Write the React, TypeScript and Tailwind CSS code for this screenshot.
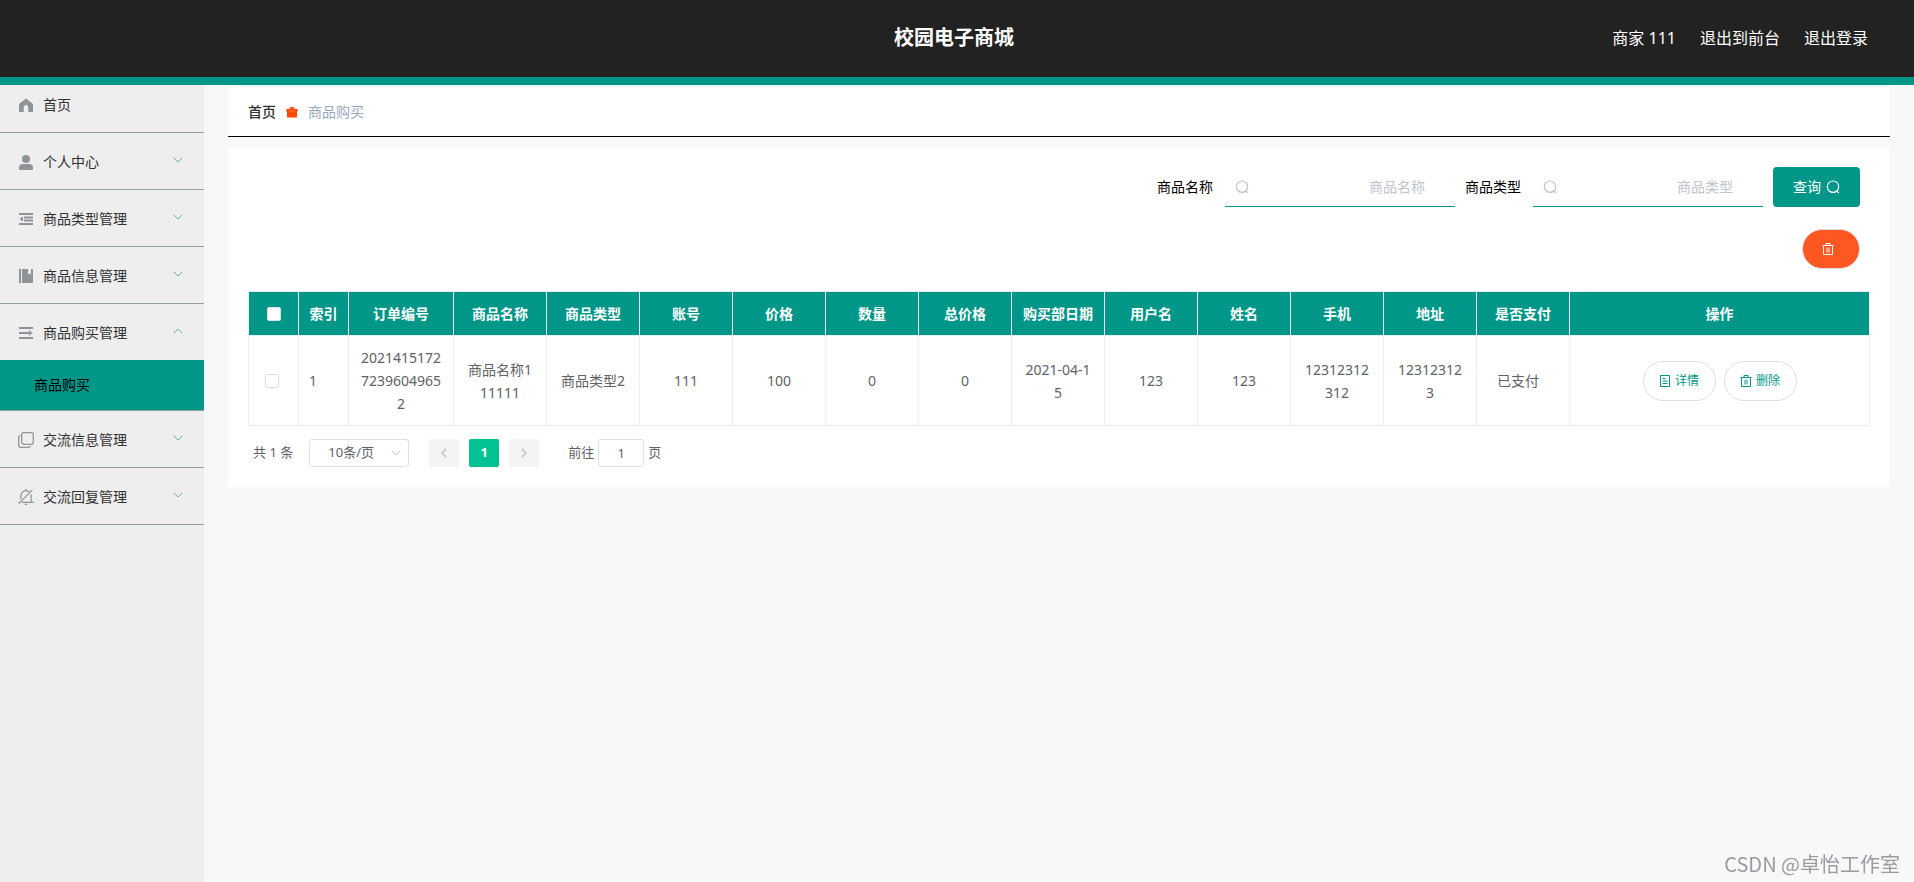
import { useState } from "react";
import type { ReactNode } from "react";

/* ------------------- ICONS ------------------- */
const HomeIcon = () => (
  <svg viewBox="0 0 14 14" className="size-[14px] fill-[#909399]">
    <path d="M7 0.4 14 6v8H9.3V9.2a2.3 2.3 0 0 0-4.6 0V14H0V6z" />
  </svg>
);

const UserIcon = () => (
  <svg viewBox="0 0 14 15" className="h-[15px] w-[14px] fill-[#909399]">
    <circle cx="7" cy="4" r="4" />
    <path d="M4 9h6a4 4 0 0 1 4 4v1a1 1 0 0 1-1 1H1a1 1 0 0 1-1-1v-1a4 4 0 0 1 4-4z" />
  </svg>
);

const FoldIcon = () => (
  <svg viewBox="0 0 14 12" className="h-3 w-[14px] fill-[#909399]">
    <path d="M0 0h14v2H0zM5 3.4h9v2H5zM5 6.6h9v2H5zM0 10h14v2H0zM4 3.6v4.8L.6 6z" />
  </svg>
);

const ExpandIcon = () => (
  <svg viewBox="0 0 14 12" className="h-3 w-[14px] fill-[#909399]">
    <path d="M0 0h14v2H0zM0 5h10v2H0zM0 10h14v2H0zM9.8 3.2v5.6L13.6 6z" />
  </svg>
);

const BookIcon = () => (
  <svg viewBox="0 0 14 14" className="size-[14px] fill-[#909399]">
    <path d="M0 0h2v14H0zM3 0h6v5.4l1.5-1.2L12 5.4V0h2v14H3z" />
  </svg>
);

const CopyIcon = () => (
  <svg viewBox="0 0 16 16" className="size-4 fill-none stroke-[#909399] stroke-[1.3]">
    <rect x="3.7" y="0.7" width="11.6" height="11.6" rx="2" />
    <path d="M2.3 3.7A2 2 0 0 0 .7 5.6v7.7a2 2 0 0 0 2 2h7.7a2 2 0 0 0 2-1.2" />
  </svg>
);

const BellOffIcon = () => (
  <svg viewBox="0 0 16 16" className="size-4 fill-none stroke-[#909399] stroke-[1.2]">
    <path d="M.8 14.6 14.4.8M2.8 10.4V6.8a5.2 5.2 0 0 1 8.4-4M13.2 5.2v8.2M4 13.4h11.8M.4 13.4h1M6.8 15.4h2.4M8 0v1.6" />
  </svg>
);

const GiftIcon = () => (
  <svg viewBox="0 0 12 12" className="size-3 fill-[#ff4500]">
    <path d="M1 5.8h10v5.7H1zM.4 3h3.8L3.2 1.8l.9-.8 1.2 1.3V.4h1.4v1.9L7.9 1l.9.8-1 1.2h3.8v2.8H.4z" />
    <path d="M4 4.2v2M6 4.2v2.4M8 4.2v2" className="stroke-[#ffb39b] stroke-[0.6]" />
  </svg>
);

const SearchIcon = ({ className }: { className: string }) => (
  <svg viewBox="0 0 14 14" className={`size-[14px] fill-none stroke-[1.2] ${className}`}>
    <circle cx="7" cy="6.7" r="5.7" />
    <path d="m10.4 10.3 2.5 2.9" />
  </svg>
);

const TrashIcon = () => (
  <svg viewBox="0 0 12 12" className="size-3 fill-none stroke-current">
    <path d="M.5 2.5h11M4 2.5v-2h4v2M1.5 2.5v9h9v-9M5 4.5v5M7 4.5v5" />
  </svg>
);

const DocIcon = () => (
  <svg viewBox="0 0 12 12" className="size-3 fill-none stroke-current">
    <path d="M1.5.5h9v11h-9zM3.5 3.5h3M3.5 6h5M3.5 8.500h5" />
  </svg>
);

const Chevron = ({ className }: { className: string }) => (
  <svg viewBox="0 0 10 6" className={`h-[6px] w-[10px] fill-none ${className}`}>
    <path d="M.7.8 5 5 9.3.8" />
  </svg>
);

/* ------------------- DATA ------------------- */
type MenuItem = { label: string; icon: ReactNode; children?: string[] };

const menu: MenuItem[] = [
  { label: "首页", icon: <HomeIcon /> },
  { label: "个人中心", icon: <UserIcon />, children: [] },
  { label: "商品类型管理", icon: <FoldIcon />, children: [] },
  { label: "商品信息管理", icon: <BookIcon />, children: [] },
  { label: "商品购买管理", icon: <ExpandIcon />, children: ["商品购买"] },
  { label: "交流信息管理", icon: <CopyIcon />, children: [] },
  { label: "交流回复管理", icon: <BellOffIcon />, children: [] },
];

const columns = [
  { title: "订单编号", value: "202141517272396049652", width: "w-[105px]" },
  { title: "商品名称", value: "商品名称111111", width: "w-[93px]" },
  { title: "商品类型", value: "商品类型2", width: "w-[93px]" },
  { title: "账号", value: "111", width: "w-[93px]" },
  { title: "价格", value: "100", width: "w-[93px]" },
  { title: "数量", value: "0", width: "w-[93px]" },
  { title: "总价格", value: "0", width: "w-[93px]" },
  { title: "购买部日期", value: "2021-04-15", width: "w-[93px]" },
  { title: "用户名", value: "123", width: "w-[93px]" },
  { title: "姓名", value: "123", width: "w-[93px]" },
  { title: "手机", value: "12312312312", width: "w-[93px]" },
  { title: "地址", value: "123123123", width: "w-[93px]" },
];

/* ------------------- COMPONENTS ------------------- */
const Sidebar = () => {
  const [open, setOpen] = useState("商品购买管理");

  return (
    <nav className="-mt-[9px] w-[204px] shrink-0 bg-[#eee] text-sm text-[#303133]">
      <ul>
        {menu.map(({ label, icon, children }) => (
          <li key={label} className="border-b border-[#8fa39d]">
            <button
              type="button"
              onClick={() => setOpen(open === label ? "" : label)}
              className="flex h-14 w-full items-center pt-[2px] pr-[21px] pl-[18px] text-left"
            >
              <span className="mr-[9px] flex w-4 justify-center">{icon}</span>
              <span className="flex-1">{label}</span>
              {children && (
                <span className="mb-1">
                  <Chevron className={open === label ? "rotate-180 stroke-[#5fb3a8]" : "stroke-[#5fb3a8]"} />
                </span>
              )}
            </button>
            {open === label &&
              children?.map((child) => (
                <a key={child} href="#" className="flex h-[50px] items-center bg-[#009688] pl-[34px] text-black">
                  {child}
                </a>
              ))}
          </li>
        ))}
      </ul>
    </nav>
  );
};

const SearchField = ({ id, label }: { id: string; label: string }) => (
  <div className="flex items-center">
    <label htmlFor={id} className="mr-3 text-sm text-black">
      {label}
    </label>
    <div className="flex h-10 w-[230px] items-center border-b border-[#009688] px-[10px]">
      <SearchIcon className="stroke-[#c0c4cc]" />
      <input
        id={id}
        placeholder={label}
        className="min-w-0 flex-1 pr-5 text-right text-sm outline-none placeholder:text-[#c0c4cc]"
      />
    </div>
  </div>
);

const RowButton = ({ icon, label }: { icon: ReactNode; label: string }) => (
  <button
    type="button"
    className="flex h-10 w-[73px] items-center justify-center gap-1 rounded-full border border-[#dcdfe6] text-xs text-[#009688]"
  >
    {icon}
    {label}
  </button>
);

const OrderTable = () => (
  <table className="w-full table-fixed border-collapse text-center text-sm leading-[23px] text-[#606266]">
    <thead>
      <tr className="h-11 bg-[#009688] text-white [&>th]:border [&>th]:border-[#ebeef5] [&>th]:font-bold">
        <th className="w-[50px]">
          <input type="checkbox" aria-label="全选" className="mx-auto block size-[14px] appearance-none rounded-xs border border-[#dcdfe6] bg-white" />
        </th>
        <th className="w-[50px]">索引</th>
        {columns.map((col) => (
          <th key={col.title} className={col.width}>
            {col.title}
          </th>
        ))}
        <th className="w-[93px]">是否支付</th>
        <th>操作</th>
      </tr>
    </thead>
    <tbody>
      <tr className="h-[90px] [&>td]:border [&>td]:border-[#ebeef5] [&>td]:px-[10px] [&>td]:break-all">
        <td>
          <input type="checkbox" aria-label="选择" className="ml-[6px] block size-[14px] appearance-none rounded-xs border border-[#dcdfe6] bg-white" />
        </td>
        <td className="text-left">1</td>
        {columns.map((col) => (
          <td key={col.title}>{col.value}</td>
        ))}
        <td>
          <span className="mr-[10px]">已支付</span>
        </td>
        <td>
          <div className="flex justify-center gap-2">
            <RowButton icon={<DocIcon />} label="详情" />
            <RowButton icon={<TrashIcon />} label="删除" />
          </div>
        </td>
      </tr>
    </tbody>
  </table>
);

const Pagination = () => (
  <div className="flex h-7 items-center pl-[5px] text-[13px] text-[#606266]">
    <span>共 1 条</span>
    <div className="relative ml-4">
      <select
        aria-label="每页条数"
        className="h-7 w-[100px] appearance-none rounded-[3px] border border-[#dcdfe6] bg-white pr-4 text-center"
      >
        <option>10条/页</option>
      </select>
      <Chevron className="pointer-events-none absolute top-[11px] right-2 stroke-[#c0c4cc]" />
    </div>
    <button type="button" aria-label="上一页" className="ml-5 flex h-7 w-[30px] items-center justify-center rounded-xs bg-[#f4f4f5]">
      <Chevron className="rotate-90 stroke-[#c0c4cc] stroke-[1.5]" />
    </button>
    <button type="button" className="ml-[10px] h-7 w-[30px] rounded-xs bg-[#00c292] font-bold text-white">
      1
    </button>
    <button type="button" aria-label="下一页" className="ml-[10px] flex h-7 w-[30px] items-center justify-center rounded-xs bg-[#f4f4f5]">
      <Chevron className="-rotate-90 stroke-[#c0c4cc] stroke-[1.5]" />
    </button>
    <label className="ml-[29px] flex items-center gap-1">
      前往
      <input defaultValue="1" className="h-7 w-[46px] rounded-[3px] border border-[#dcdfe6] text-center" />
      页
    </label>
  </div>
);

const App = () => (
  <div className="flex min-h-screen flex-col bg-[#f7f8fa] font-['Noto_Sans','Noto_Sans_CJK_SC',sans-serif]">
    {/* Header */}
    <header className="relative z-10 grid h-[85px] grid-cols-3 items-center border-b-8 border-[#009688] bg-[#222] pr-[46px] pb-px pl-10 text-base text-white">
      <h1 className="col-start-2 text-center text-xl font-bold">校园电子商城</h1>
      <div className="flex justify-end gap-6">
        <span>商家 111</span>
        <a href="#">退出到前台</a>
        <a href="#">退出登录</a>
      </div>
    </header>

    <div className="flex flex-1">
      <Sidebar />

      <main className="min-w-0 flex-1 px-6">
        {/* Breadcrumb */}
        <div className="mt-[2px] flex h-[50px] items-center border-b border-black bg-white px-5 text-sm">
          <a href="#" className="font-medium text-[#303133]">首页</a>
          <span className="mx-[10px]"><GiftIcon /></span>
          <span className="text-[#97a8be]">商品购买</span>
        </div>

        {/* Order list */}
        <section className="mt-[10px] bg-white p-5">
          <form className="flex justify-end gap-[10px] pr-[10px]" onSubmit={(e) => e.preventDefault()}>
            <SearchField id="name" label="商品名称" />
            <SearchField id="type" label="商品类型" />
            <button
              type="submit"
              className="flex h-10 w-[87px] items-center justify-center gap-[5px] rounded-sm bg-[#009688] text-sm text-white"
            >
              查询
              <SearchIcon className="stroke-white" />
            </button>
          </form>
          <div className="my-[22px] flex justify-end pr-[10px]">
            <button
              type="button"
              aria-label="批量删除"
              className="flex h-10 w-[58px] items-center justify-center rounded-full border border-[#dcdfe6] bg-[#ff5722] pr-[6px] text-white"
            >
              <TrashIcon />
            </button>
          </div>
          <OrderTable />
          <div className="mt-[13px]">
            <Pagination />
          </div>
        </section>
      </main>
    </div>

    <p className="fixed right-[14px] bottom-1 font-['Noto_Sans_CJK_SC',sans-serif] text-xl leading-7 text-[#999b9f]">
      CSDN @卓怡工作室
    </p>
  </div>
);

export default App;
